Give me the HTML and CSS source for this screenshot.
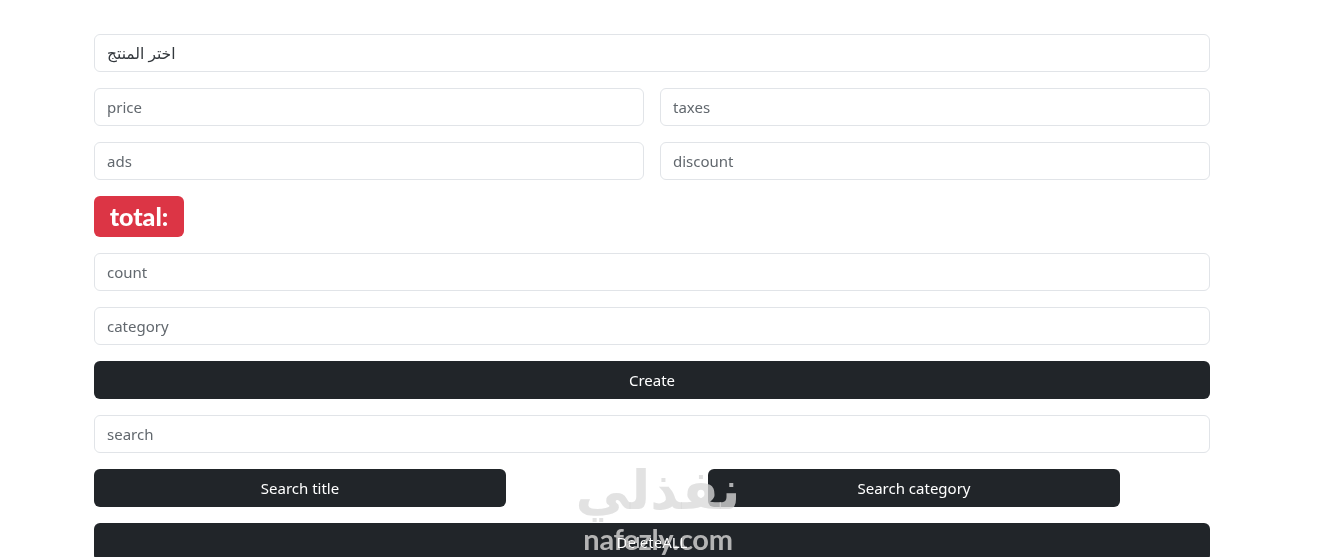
FILE: index.html
```html
<!DOCTYPE html>
<html lang="en">
<head>
<meta charset="utf-8">
<title>Products</title>
<link rel="stylesheet" href="styles.css">
</head>
<body>
<main class="form">
  <select class="field select"><option>اختر المنتج</option></select>
  <div class="pair">
    <input class="field" placeholder="price">
    <input class="field" placeholder="taxes">
  </div>
  <div class="pair">
    <input class="field" placeholder="ads">
    <input class="field" placeholder="discount">
  </div>
  <div class="total-row"><span class="total">total:</span></div>
  <input class="field" placeholder="count">
  <input class="field" placeholder="category">
  <button class="btn">Create</button>
  <input class="field" placeholder="search">
  <div class="search-row">
    <button class="btn">Search title</button>
    <button class="btn">Search category</button>
  </div>
  <button class="btn">DeleteALL</button>
</main>
<div class="watermark" aria-hidden="true">
  <span class="wm-ar">نفذلي</span>
  <span class="wm-en">nafezly.com</span>
</div>
</body>
</html>
```
FILE: styles.css
```css
* { box-sizing: border-box; }
html, body { height: 100%; overflow: hidden; }
body {
  margin: 0;
  background: #fff;
  color: #212529;
  font-family: "Noto Sans", "DejaVu Sans", sans-serif;
  font-size: 16px;
}
.form {
  width: 1116px;
  margin-left: 94px;
  padding-top: 34px;
  display: flex;
  flex-direction: column;
  gap: 16px;
}
.field {
  display: block;
  width: 100%;
  height: 38px;
  padding: 0 12px;
  border: 1px solid #e1e4e8;
  border-radius: 6px;
  background: #fff;
  color: #212529;
  font: inherit;
  font-size: 15px;
  outline: none;
}
.field::placeholder { color: #62686e; opacity: 1; }
.select { appearance: none; font-size: 15.5px; color: #33383d; }
.pair {
  display: grid;
  grid-template-columns: 1fr 1fr;
  gap: 16px;
}
.total-row { display: flex; }
.total {
  width: 90px;
  height: 41px;
  display: flex;
  align-items: center;
  justify-content: center;
  border-radius: 6px;
  background: #dc3545;
  color: #fff;
  font-family: "Lato", sans-serif;
  font-size: 25px;
  font-weight: 900;
  line-height: 1;
}
.btn {
  display: block;
  width: 100%;
  height: 38px;
  flex: none;
  border: 0;
  border-radius: 6px;
  background: #212529;
  color: #fff;
  font: inherit;
  font-size: 15px;
}
.search-row {
  display: grid;
  grid-template-columns: 412px 412px;
  column-gap: 202px;
}
.watermark {
  position: absolute;
  left: 570px;
  top: 458px;
  width: 176px;
  display: flex;
  flex-direction: column;
  align-items: center;
  color: rgba(217, 217, 217, 0.77);
  font-family: "DejaVu Sans", sans-serif;
  font-weight: 700;
  pointer-events: none;
}
.wm-ar { font-size: 54px; line-height: 66px; }
.wm-en {
  font-family: "Lato", sans-serif;
  font-size: 29px;
  line-height: 32px;
  font-weight: 700;
  letter-spacing: -0.3px;
  margin-top: -1px;
  color: #b4b4b4;
  mix-blend-mode: lighten;
}
```
